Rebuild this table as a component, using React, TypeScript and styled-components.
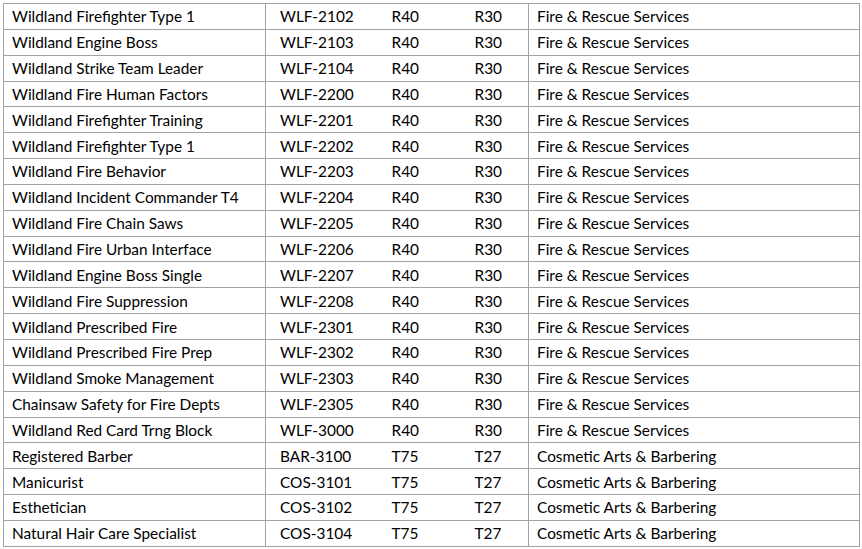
import React from "react";
import styled, { createGlobalStyle } from "styled-components";

const Global = createGlobalStyle`
  html, body { margin: 0; padding: 0; background: #ffffff; }
  body { font-family: "Lato", "Open Sans", sans-serif; }
`;

const Page = styled.div`
  padding: 3px 0 0 3px;
`;

const Table = styled.table`
  border-collapse: collapse;
  width: 856px;
  table-layout: fixed;
  border: 1px solid #a3a3a3;
  font-size: 15.4px;
  color: #000;
`;

const Row = styled.tr`
  height: 25.85px;
  border-top: 1px solid #a3a3a3;
`;

const Cell = styled.td<{ $w: number; $pad: number; $divider?: boolean }>`
  box-sizing: border-box;
  width: ${(p) => p.$w}px;
  padding: 0 0 0 ${(p) => p.$pad}px;
  border-left: ${(p) => (p.$divider ? "1px solid #a3a3a3" : "none")};
  white-space: nowrap;
  overflow: hidden;
  vertical-align: middle;
  line-height: 18px;
`;

type R = [string, string, string, string, string];

const rows: R[] = [
  ["Wildland Firefighter Type 1", "WLF-2102", "R40", "R30", "Fire & Rescue Services"],
  ["Wildland Engine Boss", "WLF-2103", "R40", "R30", "Fire & Rescue Services"],
  ["Wildland Strike Team Leader", "WLF-2104", "R40", "R30", "Fire & Rescue Services"],
  ["Wildland Fire Human Factors", "WLF-2200", "R40", "R30", "Fire & Rescue Services"],
  ["Wildland Firefighter Training", "WLF-2201", "R40", "R30", "Fire & Rescue Services"],
  ["Wildland Firefighter Type 1", "WLF-2202", "R40", "R30", "Fire & Rescue Services"],
  ["Wildland Fire Behavior", "WLF-2203", "R40", "R30", "Fire & Rescue Services"],
  ["Wildland Incident Commander T4", "WLF-2204", "R40", "R30", "Fire & Rescue Services"],
  ["Wildland Fire Chain Saws", "WLF-2205", "R40", "R30", "Fire & Rescue Services"],
  ["Wildland Fire Urban Interface", "WLF-2206", "R40", "R30", "Fire & Rescue Services"],
  ["Wildland Engine Boss Single", "WLF-2207", "R40", "R30", "Fire & Rescue Services"],
  ["Wildland Fire Suppression", "WLF-2208", "R40", "R30", "Fire & Rescue Services"],
  ["Wildland Prescribed Fire", "WLF-2301", "R40", "R30", "Fire & Rescue Services"],
  ["Wildland Prescribed Fire Prep", "WLF-2302", "R40", "R30", "Fire & Rescue Services"],
  ["Wildland Smoke Management", "WLF-2303", "R40", "R30", "Fire & Rescue Services"],
  ["Chainsaw Safety for Fire Depts", "WLF-2305", "R40", "R30", "Fire & Rescue Services"],
  ["Wildland Red Card Trng Block", "WLF-3000", "R40", "R30", "Fire & Rescue Services"],
  ["Registered Barber", "BAR-3100", "T75", "T27", "Cosmetic Arts & Barbering"],
  ["Manicurist", "COS-3101", "T75", "T27", "Cosmetic Arts & Barbering"],
  ["Esthetician", "COS-3102", "T75", "T27", "Cosmetic Arts & Barbering"],
  ["Natural Hair Care Specialist", "COS-3104", "T75", "T27", "Cosmetic Arts & Barbering"],
];

export default function App() {
  return (
    <>
      <Global />
      <Page>
        <Table>
          <tbody>
            {rows.map((r, i) => (
              <Row key={i}>
                <Cell $w={262} $pad={8}>{r[0]}</Cell>
                <Cell $w={110} $pad={14} $divider>{r[1]}</Cell>
                <Cell $w={85} $pad={16}>{r[2]}</Cell>
                <Cell $w={68} $pad={14}>{r[3]}</Cell>
                <Cell $w={331} $pad={8} $divider>{r[4]}</Cell>
              </Row>
            ))}
          </tbody>
        </Table>
      </Page>
    </>
  );
}
